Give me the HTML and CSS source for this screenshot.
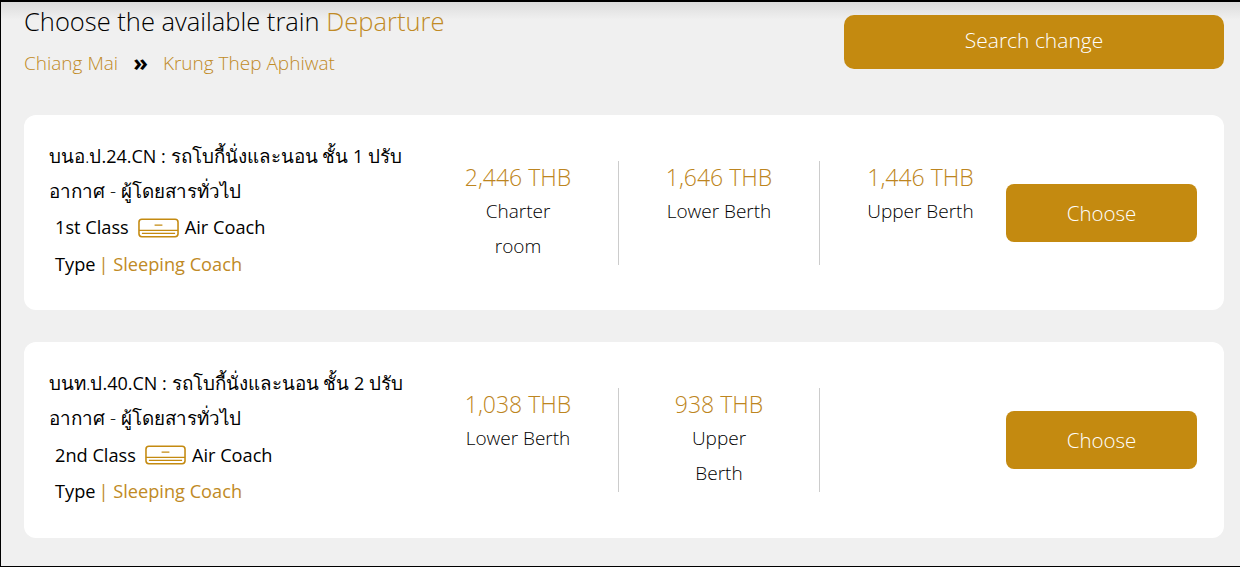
FILE: index.html
```html
<!DOCTYPE html>
<html lang="en">
<head>
    <meta charset="UTF-8">
    <meta name="viewport" content="width=device-width, initial-scale=1.0">
    <title>Choose train</title>
    <link rel="stylesheet" href="styles.css">
</head>
<body>
    <div class="frame">
        <div class="header">
            <div class="headerText">
                <h1 class="title">Choose the available train <span class="gold">Departure</span></h1>
                <div class="route">
                    <span class="gold">Chiang Mai</span>
                    <span class="arrows">»</span>
                    <span class="gold">Krung Thep Aphiwat</span>
                </div>
            </div>
            <button class="searchBtn">Search change</button>
        </div>

        <div class="card">
            <div class="info">
                <div class="infoName"><span class="thai">บนอ.ป</span>.24.CN : <span class="thai">รถโบกี้นั่งและนอน ชั้น</span> 1 <span class="thai">ปรับ<br>อากาศ - ผู้โดยสารทั่วไป</span></div>
                <div class="infoLine">1st Class
                    <svg class="acIcon" viewBox="0 0 42 20"><rect x="1" y="1" width="40" height="18" rx="3" fill="none" stroke="#c48a10" stroke-width="1.6"/><path d="M17 7h8M1 12.500h40M4 15.500h34" fill="none" stroke="#c48a10" stroke-width="1.3"/></svg>
                    Air Coach</div>
                <div class="infoLine">Type <span class="gold">| Sleeping Coach</span></div>
            </div>
            <div class="fare">
                <div class="price">2,446 THB</div>
                <div class="fareName">Charter<br>room</div>
            </div>
            <div class="fare">
                <div class="price">1,646 THB</div>
                <div class="fareName">Lower Berth</div>
            </div>
            <div class="fare noLine">
                <div class="price">1,446 THB</div>
                <div class="fareName">Upper Berth</div>
            </div>
            <button class="chooseBtn">Choose</button>
        </div>

        <div class="card cardTall">
            <div class="info">
                <div class="infoName"><span class="thai">บนท.ป</span>.40.CN : <span class="thai">รถโบกี้นั่งและนอน ชั้น</span> 2 <span class="thai">ปรับ<br>อากาศ - ผู้โดยสารทั่วไป</span></div>
                <div class="infoLine">2nd Class
                    <svg class="acIcon" viewBox="0 0 42 20"><rect x="1" y="1" width="40" height="18" rx="3" fill="none" stroke="#c48a10" stroke-width="1.6"/><path d="M17 7h8M1 12.500h40M4 15.500h34" fill="none" stroke="#c48a10" stroke-width="1.3"/></svg>
                    Air Coach</div>
                <div class="infoLine">Type <span class="gold">| Sleeping Coach</span></div>
            </div>
            <div class="fare">
                <div class="price">1,038 THB</div>
                <div class="fareName">Lower Berth</div>
            </div>
            <div class="fare">
                <div class="price">938 THB</div>
                <div class="fareName">Upper<br>Berth</div>
            </div>
            <div class="fare noLine"></div>
            <button class="chooseBtn">Choose</button>
        </div>
    </div>
</body>
</html>
```

FILE: styles.css
```css
body {
    font-family: 'Open Sans', 'Noto Sans', sans-serif;
    margin: 0;
    padding: 0;
    background-color: #ffffff;
}

.frame {
    width: 1240px;
    height: 567px;
    box-sizing: border-box;
    border: 1px solid #000000;
    border-top-width: 2px;
    border-right: none;
    background: linear-gradient(#dcdcdc, #f0f0f0 18px);
    padding: 0 16px 0 23px;
}

.gold {
    color: #c08a25;
}

.header {
    display: flex;
    justify-content: space-between;
    height: 113px;
}

.title {
    font-size: 25.500px;
    font-weight: 300;
    line-height: 30px;
    margin: 4px 0 0;
    color: #000000;
}

.route {
    font-size: 19px;
    font-weight: 300;
    line-height: 26px;
    margin-top: 14px;
    display: flex;
    gap: 15px;
}

.arrows {
    font-size: 24px;
    font-weight: 700;
    line-height: 24px;
    color: #000000;
}

.searchBtn {
    width: 380px;
    height: 54px;
    margin-top: 13px;
    padding-bottom: 6px;
    background-color: #c48a10;
    color: #ffffff;
    border: none;
    border-radius: 10px;
    font-family: inherit;
    font-size: 21px;
    font-weight: 300;
}

.card {
    width: 1200px;
    height: 195px;
    box-sizing: border-box;
    background-color: #ffffff;
    border-radius: 12px;
    display: flex;
    align-items: center;
    padding: 0 27px 0 25px;
    margin-bottom: 32px;
    color: #000000;
}

.cardTall {
    height: 196px;
}

.info {
    width: 369px;
    flex-shrink: 0;
    font-size: 18px;
    line-height: 35px;
    white-space: nowrap;
    margin-top: -5px;
}

.thai {
    font-size: 18.800px;
    font-weight: 300;
}

.infoLine {
    padding-left: 6px;
    display: flex;
    align-items: center;
    gap: 6px;
    margin-top: 1.500px;
    font-size: 18.200px;
}

.infoLine .gold {
    margin-left: -3px;
}

.acIcon {
    width: 41px;
    height: 20px;
    margin-left: 3px;
}

.fare {
    width: 201px;
    height: 104px;
    box-sizing: border-box;
    text-align: center;
    border-right: 1px solid #cccccc;
    flex-shrink: 0;
    white-space: nowrap;
}

.fare.noLine {
    border-right: none;
}

.price {
    font-size: 23px;
    line-height: 32px;
    font-weight: 300;
    color: #bd8520;
}

.fareName {
    font-size: 19px;
    line-height: 35px;
    font-weight: 300;
    margin-top: 1px;
}

.chooseBtn {
    width: 191px;
    height: 58px;
    margin-left: -15px;
    background-color: #c48a10;
    color: #ffffff;
    border: none;
    border-radius: 8px;
    font-family: inherit;
    font-size: 20.500px;
    font-weight: 300;
    flex-shrink: 0;
}
```
